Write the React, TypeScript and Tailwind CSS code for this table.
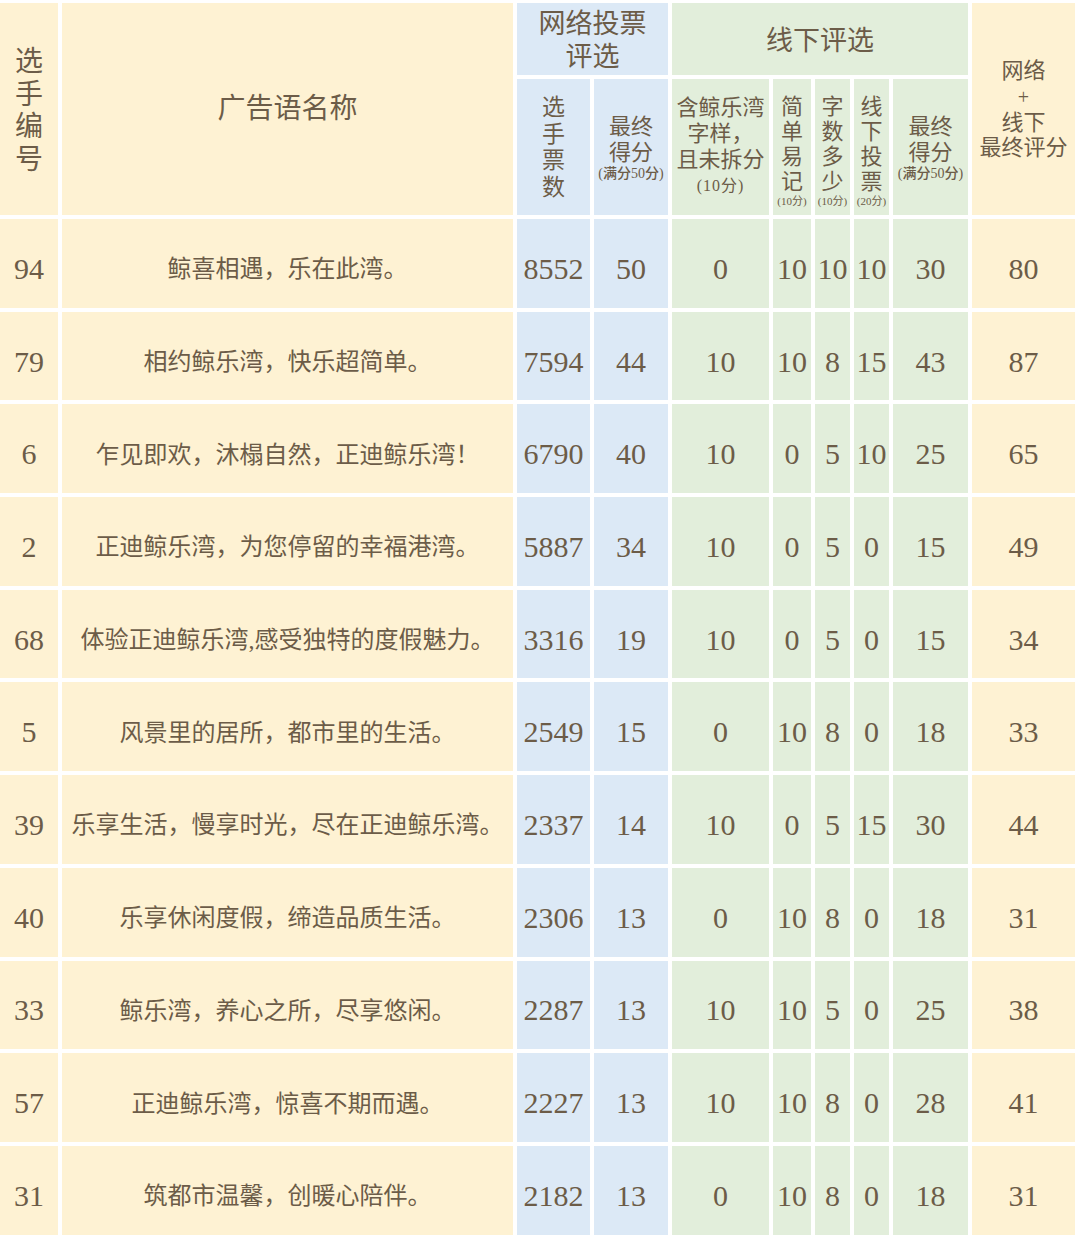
type Row = [string, string, string, string, string, string, string, string, string, string];

const rows: Row[] = [
  ['94', '鲸喜相遇，乐在此湾。', '8552', '50', '0', '10', '10', '10', '30', '80'],
  ['79', '相约鲸乐湾，快乐超简单。', '7594', '44', '10', '10', '8', '15', '43', '87'],
  ['6', '乍见即欢，沐榻自然，正迪鲸乐湾！', '6790', '40', '10', '0', '5', '10', '25', '65'],
  ['2', '正迪鲸乐湾，为您停留的幸福港湾。', '5887', '34', '10', '0', '5', '0', '15', '49'],
  ['68', '体验正迪鲸乐湾,感受独特的度假魅力。', '3316', '19', '10', '0', '5', '0', '15', '34'],
  ['5', '风景里的居所，都市里的生活。', '2549', '15', '0', '10', '8', '0', '18', '33'],
  ['39', '乐享生活，慢享时光，尽在正迪鲸乐湾。', '2337', '14', '10', '0', '5', '15', '30', '44'],
  ['40', '乐享休闲度假，缔造品质生活。', '2306', '13', '0', '10', '8', '0', '18', '31'],
  ['33', '鲸乐湾，养心之所，尽享悠闲。', '2287', '13', '10', '10', '5', '0', '25', '38'],
  ['57', '正迪鲸乐湾，惊喜不期而遇。', '2227', '13', '10', '10', '8', '0', '28', '41'],
  ['31', '筑都市温馨，创暖心陪伴。', '2182', '13', '0', '10', '8', '0', '18', '31'],
];

const Y = 'bg-[#fef2d3]';
const B = 'bg-[#dce9f6]';
const G = 'bg-[#e2eedb]';

// which background each of the ten columns uses
const colBg = [Y, Y, B, B, G, G, G, G, G, Y];

function Vertical({ text, lh }: { text: string; lh: string }) {
  return (
    <div className={`flex flex-col items-center ${lh}`}>
      {text.split('').map((c, i) => (
        <span key={i}>{c}</span>
      ))}
    </div>
  );
}

function SmallScore({ text }: { text: string }) {
  return <span className="text-[14px] leading-[16px] whitespace-nowrap font-medium">{text}</span>;
}

export default function App() {
  return (
    <div className="w-[1080px] h-[1239px] bg-white pt-[3px] pr-[5px] pb-[4px] font-['Liberation_Serif','Noto_Sans_CJK_SC',serif] text-[#6c5c48]">
      <div className="grid grid-cols-[58px_451px_73px_74px_97px_38px_35px_35px_75px_103px] grid-rows-[72px_136px_repeat(11,88.7px)] gap-[4px]">
        {/* header, first line */}
        <div className={`${Y} row-span-2 flex items-center justify-center text-[28px] pt-[4px]`}>
          <Vertical text="选手编号" lh="leading-[32.5px]" />
        </div>
        <div className={`${Y} row-span-2 flex items-center justify-center text-[28px]`}>
          广告语名称
        </div>
        <div className={`${B} col-span-2 flex flex-col items-center justify-center text-[27px] leading-[33px] pt-[4px]`}>
          <span>网络投票</span>
          <span>评选</span>
        </div>
        <div className={`${G} col-span-5 flex items-center justify-center text-[27px] pt-[4px]`}>线下评选</div>
        <div className={`${Y} row-span-2 flex flex-col items-center justify-center text-[22px] leading-[25px]`}>
          <span className="mb-[2px]">网络</span>
          <span className="text-[20px]">+</span>
          <span>线下</span>
          <span>最终评分</span>
        </div>

        {/* header, second line */}
        <div className={`${B} flex items-center justify-center text-[23px] pt-[2px]`}>
          <Vertical text="选手票数" lh="leading-[26.5px]" />
        </div>
        <div className={`${B} flex flex-col items-center justify-center text-[22px] leading-[26px] pt-[2px]`}>
          <span>最终</span>
          <span>得分</span>
          <SmallScore text="(满分50分)" />
        </div>
        <div className={`${G} flex flex-col items-center justify-center text-[22px] leading-[26px]`}>
          <span>含鲸乐湾</span>
          <span>字样，</span>
          <span>且未拆分</span>
          <span className="text-[16px] leading-[26px] tracking-[1px]">(10分)</span>
        </div>
        {['简单易记', '字数多少', '线下投票'].map((t, i) => (
          <div key={t} className={`${G} flex flex-col items-center justify-center text-[22px] pt-[8px]`}>
            <Vertical text={t} lh="leading-[25px]" />
            <span className="text-[11px] leading-[14px] whitespace-nowrap">{i === 2 ? '(20分)' : '(10分)'}</span>
          </div>
        ))}
        <div className={`${G} flex flex-col items-center justify-center text-[22px] leading-[26px] pt-[2px]`}>
          <span>最终</span>
          <span>得分</span>
          <SmallScore text="(满分50分)" />
        </div>

        {/* data */}
        {rows.map(r =>
          r.map((v, i) => (
            <div
              key={`${r[0]}-${i}`}
              className={`${colBg[i]} flex items-center justify-center whitespace-nowrap ${
                i === 1 ? 'text-[24px] pt-[12px]' : 'text-[30px] pt-[10px]'
              }`}
            >
              {v}
            </div>
          ))
        )}
      </div>
    </div>
  );
}
